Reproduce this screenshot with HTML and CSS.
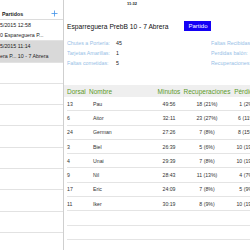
FILE: index.html
```html
<!DOCTYPE html>
<html lang="es">
<head>
    <meta charset="UTF-8">
    <meta name="viewport" content="width=device-width, initial-scale=1.0">
    <title>Partidos</title>
    <link rel="stylesheet" href="styles.css">
</head>
<body>
    <div class="screen">
        <!-- lista de partidos -->
        <div class="side">
            <div class="side-header">
                <span class="side-title">Partidos</span>
                <svg class="add" width="7" height="7" viewBox="0 0 7 7">
                    <path d="M3.5 0.5V6.5M0.5 3.5H6.5" stroke="#3f92e8" stroke-width="0.8" fill="none"/>
                </svg>
            </div>
            <div class="match">
                <p>5/2015 12:58</p>
                <p>0 Espareguera P...</p>
            </div>
            <div class="match selected">
                <p>5/2015 11:14</p>
                <p>era P... 10 - 7 Abrera</p>
            </div>
            <div class="match"></div>
            <div class="match"></div>
            <div class="match"></div>
            <div class="match"></div>
            <div class="match"></div>
            <div class="match"></div>
            <div class="match"></div>
            <div class="match"></div>
        </div>

        <!-- detalle -->
        <div class="detail">
            <div class="status">11:32</div>
            <div class="title-row">
                <span class="match-title">Esparreguera PrebB 10 - 7 Abrera</span>
                <span class="match-button">Partido</span>
            </div>
            <div class="stats">
                <span class="label">Chutes a Portería:</span><span class="value">45</span><span class="label">Faltas Recibidas:</span>
                <span class="label">Tarjetas Amarillas:</span><span class="value">1</span><span class="label">Perdidas balón:</span>
                <span class="label">Faltas cometidas:</span><span class="value">5</span><span class="label">Recuperaciones:</span>
            </div>
            <div class="table">
                <div class="head">
                    <span class="c-dorsal">Dorsal</span>
                    <span class="c-nombre">Nombre</span>
                    <span class="c-min">Minutos</span>
                    <span class="c-rec">Recuperaciones</span>
                    <span class="c-per">Pérdidas</span>
                </div>
                <div class="row"><span class="c-dorsal">13</span><span class="c-nombre">Pau</span><span class="c-min">49:56</span><span class="c-rec">18 (21%)</span><span class="c-per">1 (2%)</span></div>
                <div class="row"><span class="c-dorsal">6</span><span class="c-nombre">Aitor</span><span class="c-min">32:11</span><span class="c-rec">23 (27%)</span><span class="c-per">6 (11%)</span></div>
                <div class="row"><span class="c-dorsal">24</span><span class="c-nombre">German</span><span class="c-min">27:26</span><span class="c-rec">7 (8%)</span><span class="c-per">8 (15%)</span></div>
                <div class="row"><span class="c-dorsal">3</span><span class="c-nombre">Biel</span><span class="c-min">26:39</span><span class="c-rec">5 (6%)</span><span class="c-per">10 (19%)</span></div>
                <div class="row"><span class="c-dorsal">4</span><span class="c-nombre">Unai</span><span class="c-min">29:39</span><span class="c-rec">7 (8%)</span><span class="c-per">10 (19%)</span></div>
                <div class="row"><span class="c-dorsal">9</span><span class="c-nombre">Nil</span><span class="c-min">28:43</span><span class="c-rec">11 (13%)</span><span class="c-per">4 (7%)</span></div>
                <div class="row"><span class="c-dorsal">17</span><span class="c-nombre">Eric</span><span class="c-min">24:09</span><span class="c-rec">7 (8%)</span><span class="c-per">5 (9%)</span></div>
                <div class="row"><span class="c-dorsal">11</span><span class="c-nombre">Iker</span><span class="c-min">30:19</span><span class="c-rec">8 (9%)</span><span class="c-per">10 (19%)</span></div>
                <div class="row"></div>
                <div class="row"></div>
                <div class="row"></div>
            </div>
        </div>
    </div>
</body>
</html>
```

FILE: styles.css
```css
body{
    margin: 0;
    background-color: white;
    font-family: "Liberation Sans", Arial, sans-serif;
    color: #222;
}
p{
    margin: 0;
}
.screen{
    display: flex;
    width: 250px;
    height: 250px;
    overflow: hidden;
}
.side{
    width: 63px;
    flex-shrink: 0;
    border-right: 1px solid #cfcfcf;
}
.side-header{
    height: 20px;
    box-sizing: border-box;
    padding: 9px 5px 0 2px;
    display: flex;
    justify-content: space-between;
    align-items: center;
    border-bottom: 1px solid #dcdcdc;
}
.side-title{
    font-size: 5.3px;
    font-weight: bold;
    line-height: 10px;
}
.add{
    display: block;
    margin-top: -1px;
}
.match{
    height: 21.3px;
    box-sizing: border-box;
    padding-top: 1px;
    border-bottom: 1px solid #e2e2e2;
    font-size: 5.3px;
    line-height: 9.5px;
    white-space: nowrap;
    overflow: hidden;
}
.match.selected{
    background-color: #d9d9d9;
}
.detail{
    flex: 1;
    min-width: 0;
}
.status{
    height: 7px;
    padding-left: 63px;
    font-size: 4px;
    font-weight: bold;
    line-height: 7px;
}
.title-row{
    display: flex;
    align-items: center;
    margin-top: 14px;
    padding-left: 3px;
    height: 10px;
}
.match-title{
    font-size: 6.7px;
    color: #111;
    white-space: nowrap;
}
.match-button{
    margin-left: 16px;
    width: 27px;
    height: 10px;
    background-color: #1400f5;
    color: white;
    font-size: 6px;
    line-height: 10px;
    text-align: center;
}
.stats{
    display: grid;
    grid-template-columns: 49px 95px auto;
    margin-top: 7px;
    padding-left: 3px;
    font-size: 5.3px;
    line-height: 10px;
    white-space: nowrap;
}
.label{
    color: #98c0e6;
    overflow: hidden;
}
.value{
    color: #222;
}
.table{
    margin-top: 17px;
}
.head{
    display: flex;
    align-items: center;
    height: 12px;
    background-color: #efefef;
    color: #5c9a2c;
    font-size: 6.5px;
    white-space: nowrap;
}
.row{
    display: flex;
    align-items: center;
    height: 14.3px;
    box-sizing: border-box;
    margin-left: 3px;
    border-bottom: 1px solid #e4e4e4;
    font-size: 5.2px;
    color: #333;
    white-space: nowrap;
}
.c-dorsal{
    width: 22px;
    flex-shrink: 0;
}
.c-nombre{
    width: 67px;
    flex-shrink: 0;
}
.c-min{
    width: 26px;
    flex-shrink: 0;
    text-align: center;
}
.c-rec{
    width: 50px;
    flex-shrink: 0;
    text-align: center;
}
.c-per{
    width: 30px;
    flex-shrink: 0;
    text-align: center;
}
.head .c-dorsal{
    margin-left: 3px;
}
.row .c-nombre{
    padding-left: 4px;
    width: 63px;
}
```
